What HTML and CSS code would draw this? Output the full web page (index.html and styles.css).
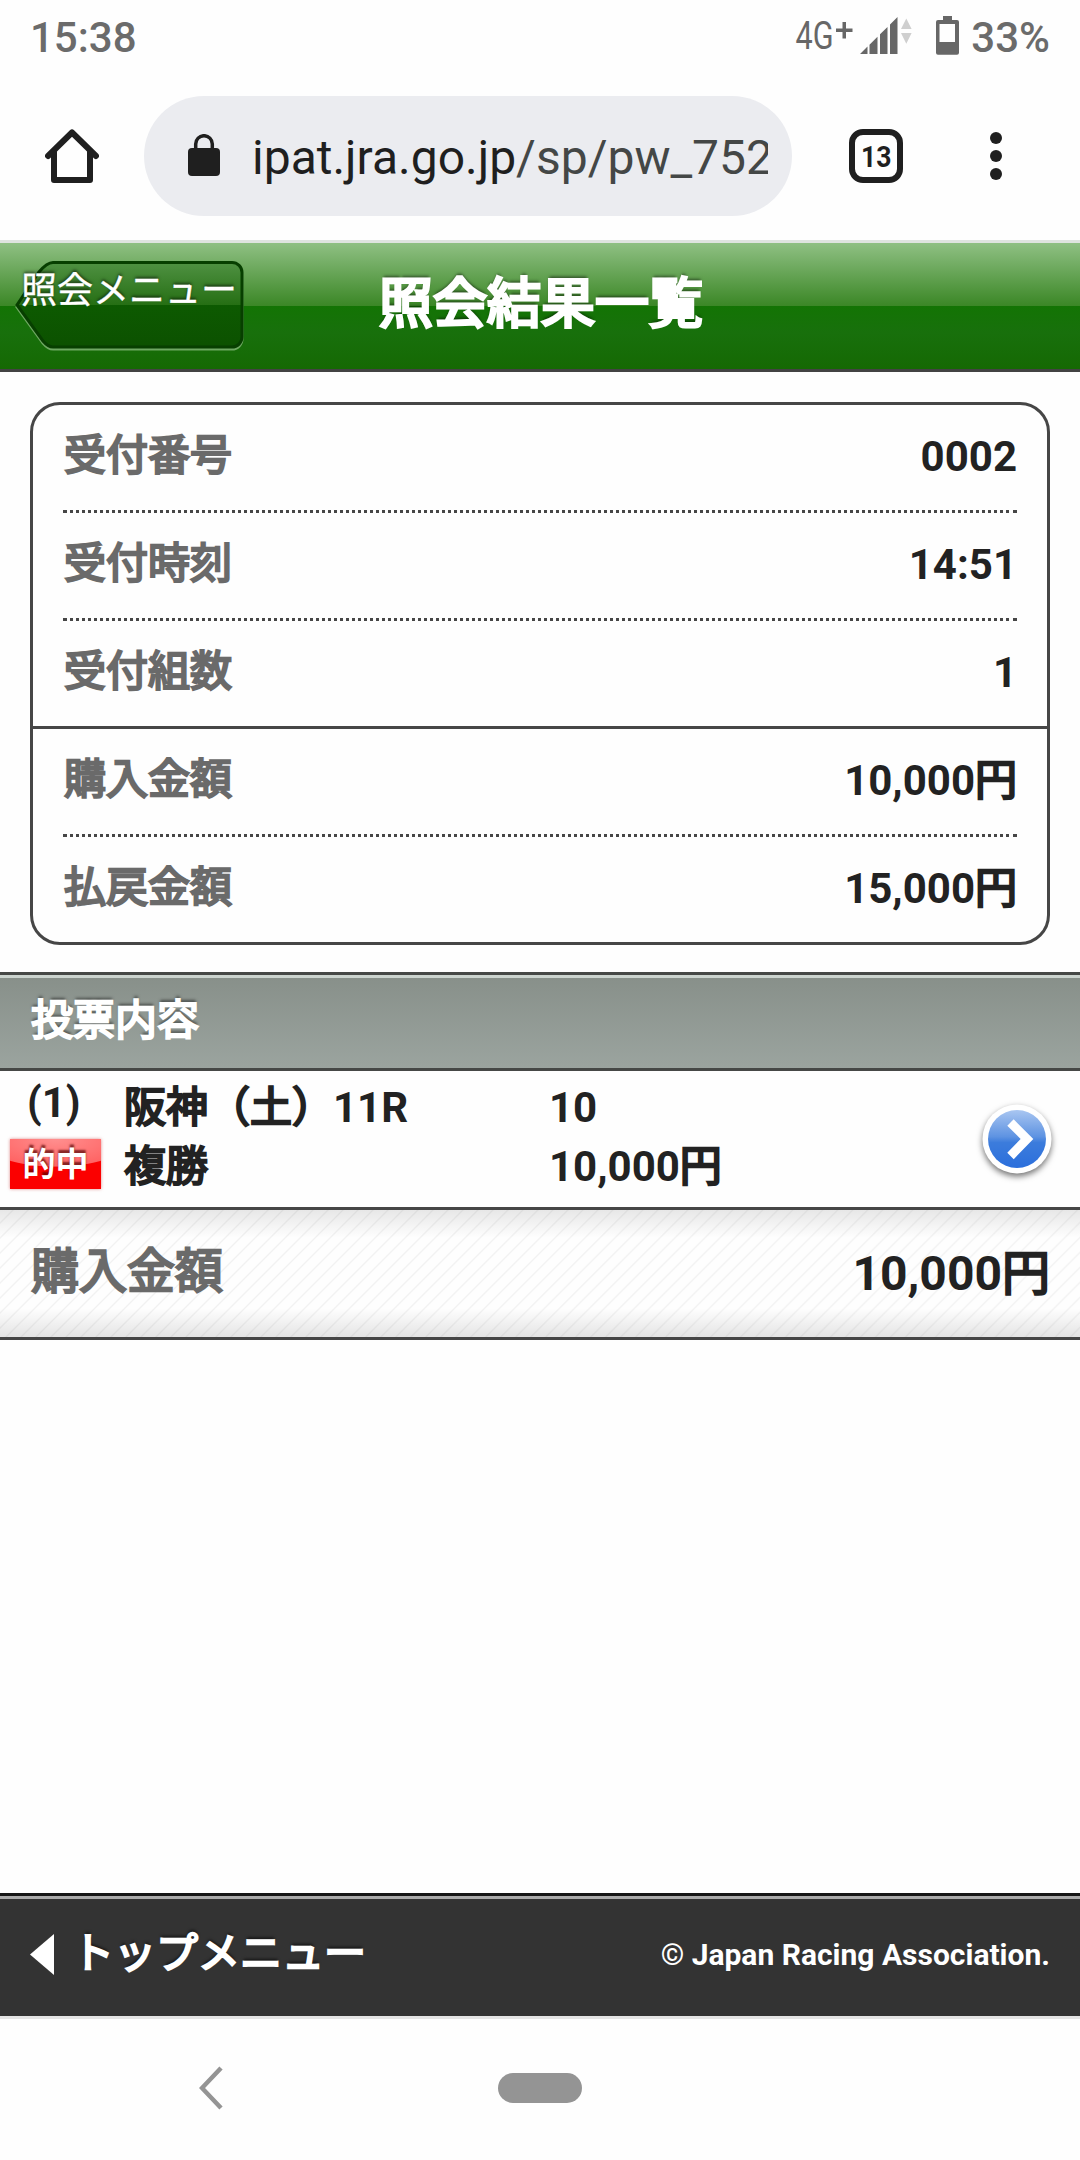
FILE: index.html
```
<!DOCTYPE html>
<html lang="ja">
<head>
<meta charset="utf-8">
<title>照会結果一覧</title>
<link rel="stylesheet" href="styles.css">
</head>
<body>
<div class="phone">
  <div class="statusbar">
    <span class="clock">15:38</span>
    <div class="indicators">
      <svg class="signal" width="118" height="60" viewBox="794 8 118 60">
        <text class="net" x="795.5" y="49" textLength="38" lengthAdjust="spacingAndGlyphs">4G</text>
        <path fill="#676767" d="M842.500 22h3.500v6.500h6.500v3.500H846v6.500h-3.500V32H836v-3.500h6.500z"/>
        <path fill="#676767" d="M860 54l7.500-7.400V54zM869.500 44.700l8-8V54h-8zM880 34.300l7.500-7.400V54H880zM890 24.400l7.500-7.400V54H890z"/>
        <path fill="#cfcfcf" d="M906.300 18.500l5.300 10.500H901zM901 33h10.600l-5.300 10.800z"/>
      </svg>
      <svg class="battery" width="23" height="39" viewBox="0 0 23 39">
        <path fill="#676767" fill-rule="evenodd" d="M7 0h9v4h5a2 2 0 0 1 2 2v30.700a2 2 0 0 1-2 2H2a2 2 0 0 1-2-2V6a2 2 0 0 1 2-2h5zM3.500 8v18h15.500V8z"/>
      </svg>
      <span class="percent">33%</span>
    </div>
  </div>

  <div class="toolbar">
    <svg class="home" width="54" height="54" viewBox="0 0 54 54" fill="none" stroke="#1f1f1f" stroke-width="6" stroke-linecap="round" stroke-linejoin="round">
      <path d="M3 27L27 3.500 51 27"/><path d="M9 23v28h36V23"/>
    </svg>
    <div class="address">
      <svg class="lock" width="32" height="42" viewBox="0 0 32 42">
        <rect x="0" y="14" width="32" height="28" rx="4" fill="#1f1f1f"/>
        <path d="M7.700 16V10a8.300 8.300 0 0 1 16.600 0v6" fill="none" stroke="#1f1f1f" stroke-width="3.500"/>
      </svg>
      <span class="url">ipat.jra.go.jp<span class="path">/sp/pw_752</span></span>
    </div>
    <div class="tabs">
      <svg width="42" height="42" viewBox="0 0 42 42"><text class="tab-count" x="6" y="31.500" textLength="30.500" lengthAdjust="spacingAndGlyphs">13</text></svg>
    </div>
    <svg class="more" width="12" height="48" viewBox="0 0 12 48" fill="#1f1f1f">
      <circle cx="6" cy="6" r="6"/><circle cx="6" cy="24" r="6"/><circle cx="6" cy="42" r="6"/>
    </svg>
  </div>

  <header class="header">
    <div class="back">
      <svg class="back-shape" width="230" height="92" viewBox="0 0 230 92">
        <defs>
          <linearGradient id="glass" x1="0" y1="0" x2="0" y2="1">
            <stop offset="0" stop-color="#4f9142"/><stop offset=".5" stop-color="#266f14"/>
            <stop offset=".5" stop-color="#0d5a01"/><stop offset="1" stop-color="#0c5100"/>
          </linearGradient>
        </defs>
        <path d="M38 4.500H217a10 10 0 0 1 10 10V79a10 10 0 0 1-10 10H38Q33 89 28 83L2 47z" fill="none" stroke="#6ea862" stroke-width="3"/>
        <path d="M38 2.500H217a10 10 0 0 1 10 10V77a10 10 0 0 1-10 10H38Q33 87 28 81L2 45 24 12Q32 2.500 38 2.500z" fill="url(#glass)" stroke="#073f00" stroke-width="3"/>
      </svg>
      <span class="back-label">照会メニュー</span>
    </div>
    <h1 class="title">照会結果一覧</h1>
  </header>

  <main class="content">
    <dl class="summary">
      <div class="item"><dt>受付番号</dt><dd>0002</dd></div>
      <div class="item"><dt>受付時刻</dt><dd>14:51</dd></div>
      <div class="item item-last"><dt>受付組数</dt><dd>1</dd></div>
      <div class="item"><dt>購入金額</dt><dd>10,000<span class="jp">円</span></dd></div>
      <div class="item"><dt>払戻金額</dt><dd>15,000<span class="jp">円</span></dd></div>
    </dl>

    <h2 class="section">投票内容</h2>

    <div class="bet">
      <div class="bet-mark">
        <span class="bet-no">(1)</span>
        <span class="hit">的中</span>
      </div>
      <div class="bet-race">
        <div><span class="jp">阪神（土）</span>11R</div>
        <div><span class="jp">複勝</span></div>
      </div>
      <div class="bet-value">
        <div>10</div>
        <div>10,000<span class="jp">円</span></div>
      </div>
      <svg class="go" width="90" height="90" viewBox="0 0 90 90">
        <defs>
          <linearGradient id="ball" x1="0" y1="0" x2="0" y2="1">
            <stop offset="0" stop-color="#a9c6f1"/><stop offset=".46" stop-color="#5e93e2"/>
            <stop offset=".56" stop-color="#3c7cdc"/><stop offset="1" stop-color="#2b6fdc"/>
          </linearGradient>
        </defs>
        <circle class="go-ring" cx="45" cy="45" r="34.500" fill="#fff"/>
        <circle cx="45" cy="45" r="29" fill="url(#ball)"/>
        <path d="M38.500 28.500L55 45 38.500 62" fill="none" stroke="#fff" stroke-width="9"/>
      </svg>
    </div>

    <div class="total"><span class="total-label">購入金額</span><span>10,000<span class="jp">円</span></span></div>
  </main>

  <footer class="footer">
    <div class="top-link">
      <svg width="24" height="41" viewBox="0 0 24 41"><path d="M24 0v41L0 20.500z" fill="#fff"/></svg>
      <span class="top-label">トップメニュー</span>
    </div>
    <span class="copyright">© Japan Racing Association.</span>
  </footer>

  <div class="navbar">
    <svg width="24" height="44" viewBox="0 0 24 44"><path d="M22 2L3 22 22 42" fill="none" stroke="#949494" stroke-width="4.500"/></svg>
    <span class="home-pill"></span>
  </div>
</div>
</body>
</html>
```
FILE: styles.css
```
* { box-sizing: border-box; }
body {
  margin: 0;
  background: #fefefe;
  color: #222;
  font-family: Roboto, "Noto Sans CJK JP", sans-serif;
}
h1, h2, dl, dt, dd { margin: 0; }
.phone {
  width: 1080px;
  height: 2160px;
  display: flex;
  flex-direction: column;
  overflow: hidden;
}
/* Japanese bold: regular outlines thickened with a stroke */
.jp, dt, .title, .section, .total-label, .top-label {
  font-weight: 400;
  -webkit-text-stroke: 2.3px currentColor;
}

/* status bar */
.statusbar {
  height: 76px;
  padding: 0 30px;
  display: flex;
  justify-content: space-between;
  align-items: center;
  font-size: 42px;
  font-weight: 500;
  line-height: 76px;
  color: #6b6b6b;
}
.indicators { display: flex; align-items: center; }
.signal { margin-right: 24px; }
.net { font-size: 38px; font-weight: 400; fill: #676767; }
.battery { margin: -5px 12px 0 0; }

/* browser toolbar */
.toolbar {
  height: 164px;
  padding: 20px 78px 24px 45px;
  display: flex;
  align-items: center;
}
.address {
  width: 648px;
  height: 120px;
  margin-left: 45px;
  padding: 0 24px 0 44px;
  border-radius: 60px;
  background: #ebecf0;
  display: flex;
  align-items: center;
}
.lock { flex: none; margin-top: -2px; }
.url {
  flex: 1;
  margin-left: 32px;
  overflow: hidden;
  white-space: nowrap;
  font-size: 48px;
  line-height: 60px;
  padding-top: 3px;
  color: #1f1f1f;
}
.path { color: #444746; }
.tabs {
  width: 54px;
  height: 54px;
  margin-left: 57px;
  border: 6px solid #1f1f1f;
  border-radius: 14px;
  display: flex;
}
.tab-count {
  font-size: 30px;
  font-weight: 700;
  fill: #1f1f1f;
}
.more { margin-left: 87px; }

/* page header */
.header {
  height: 132px;
  border-top: 3px solid #dfe4df;
  border-bottom: 3px solid #434343;
  background: linear-gradient(#8fc083 0, #3b8726 63px, #137404 63px, #18700c 90px, #156903 100%);
  display: grid;
  color: #fff;
}
.back, .title { grid-area: 1 / 1; }
.back {
  width: 230px;
  margin: 17px 0 0 15px;
  display: grid;
  z-index: 1;
}
.back-shape, .back-label { grid-area: 1 / 1; }
.back-label {
  z-index: 1;
  margin-left: 6px;
  font-size: 36px;
  line-height: 63px;
  white-space: nowrap;
  text-shadow: 0 -2px 3px rgba(0, 0, 0, .55);
  -webkit-text-stroke: .3px #fff;
}
.title {
  padding-left: 2px;
  text-align: center;
  font-size: 54px;
  line-height: 123px;
  text-shadow: 0 -3px 3px rgba(0, 0, 0, .5);
  -webkit-text-stroke-width: 3.2px;
}

/* receipt summary */
.content { flex: 1; }
.summary {
  margin: 30px 30px 27px;
  border: 3px solid #464646;
  border-radius: 30px;
  font-size: 42px;
  line-height: 103px;
}
.item {
  height: 108px;
  padding: 0 30px;
  display: flex;
  justify-content: space-between;
  background:
    linear-gradient(#464646, #464646) 30px 100% / 4px 3px no-repeat,
    linear-gradient(#464646, #464646) 980px 100% / 4px 3px no-repeat,
    repeating-linear-gradient(90deg, transparent 0 1px, #464646 1px 4px, transparent 4px 6px) 30px 100% / 948px 3px no-repeat;
}
.item:last-child { height: 105px; background: none; }
.item-last { background: none; border-bottom: 3px solid #464646; }
dt { color: #6a6a6a; margin: -1px 0 0 1px; }
dd { font-weight: 700; }

/* section bar */
.section {
  height: 99px;
  padding-left: 31px;
  border-top: 3px solid #464846;
  border-bottom: 3px solid #464846;
  background: linear-gradient(#ccd4cf 3px, #88908a 3px, #9ba49f 100%);
  color: #fff;
  font-size: 42px;
  line-height: 91px;
  text-shadow: 0 -3px 3px rgba(0, 0, 0, .5);
}

/* bet row */
.bet {
  height: 139px;
  border-bottom: 3px solid #464646;
  display: flex;
  font-size: 42px;
  font-weight: 700;
  line-height: 59px;
}
.bet-mark { width: 124px; padding: 7px 0 0 10px; }
.bet-no { display: block; height: 61px; margin-left: 17px; line-height: 50px; }
.hit {
  display: block;
  width: 91px;
  height: 50px;
  background: radial-gradient(ellipse 75px 28px at 50% 0, #ff8f8f 0, #ff6464 97%, transparent 100%), #fb0000;
  box-shadow: 0 0 3px rgba(200, 60, 60, .6);
  color: #fff;
  font-size: 33px;
  line-height: 51px;
  text-align: center;
  text-shadow: 0 -3px 2px rgba(80, 0, 0, .7);
}
.bet-race { width: 425px; padding-top: 7px; }
.bet-race .jp { margin-right: -1px; }
.bet-value { flex: 1; padding-top: 7px; }
.go { margin: 23px 18px 0 0; }
.go-ring { filter: drop-shadow(0 3px 3px rgba(0, 0, 0, .55)); }

/* total row */
.total {
  height: 130px;
  padding: 0 30px 0 31px;
  border-bottom: 3px solid #464646;
  display: flex;
  justify-content: space-between;
  font-size: 48px;
  font-weight: 700;
  line-height: 127px;
  background:
    linear-gradient(rgba(0, 0, 0, .09), transparent 28px, transparent 98px, rgba(0, 0, 0, .1)),
    repeating-linear-gradient(135deg, transparent 0 8px, rgba(0, 0, 0, .05) 9.300px, transparent 10.600px);
}
.total-label { color: #6a6a6a; margin-top: -2px; }

/* footer */
.footer {
  height: 126px;
  padding: 0 30px 4px;
  border-top: 3px solid #161616;
  border-bottom: 3px solid #e4e4e4;
  background: linear-gradient(#aaa 3px, #333 3px);
  display: flex;
  align-items: center;
  justify-content: space-between;
  color: #fff;
}
.top-link { display: flex; align-items: center; }
.top-label {
  margin-left: 18px;
  font-size: 42px;
  line-height: 60px;
  text-shadow: 0 -3px 3px rgba(0, 0, 0, .6);
}
.copyright { font-size: 30px; font-weight: 700; }

/* system navigation */
.navbar {
  height: 141px;
  padding: 0 0 3px 199px;
  display: flex;
  align-items: center;
}
.home-pill {
  width: 84px;
  height: 30px;
  margin-left: 275px;
  border-radius: 15px;
  background: #949494;
}
```
